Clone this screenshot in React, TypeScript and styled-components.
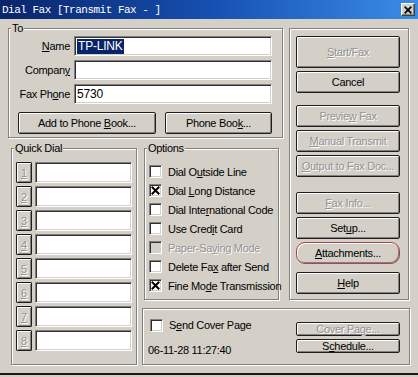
import React from "react";
import styled, { createGlobalStyle, css } from "styled-components";

const FACE = "#d4d0c8";
const SHADOW = "#808080";
const DARK = "#1e1e1e";

const GlobalStyle = createGlobalStyle`
	html, body {
		margin: 0;
		padding: 0;
		background: ${FACE};
	}
	body {
		font-family: "Liberation Sans", Arial, sans-serif;
		font-size: 11px;
		letter-spacing: -0.3px;
		color: #000;
	}
	#root {
		width: 418px;
		height: 377px;
		overflow: hidden;
	}
`;

const Window = styled.div`
	width: 418px;
	height: 375px;
	box-sizing: border-box;
	background: ${FACE};
	border-bottom: 2px solid #1a1a1a;
	display: flex;
	flex-direction: column;
`;

const TitleBar = styled.div`
	height: 19px;
	flex: none;
	display: flex;
	align-items: center;
	justify-content: space-between;
	padding: 0 3px 0 2px;
	background: linear-gradient(to right, #0a246a 0%, #1650b0 50%, #3a8ce6 100%);
`;

const TitleText = styled.span`
	font-family: "Liberation Mono", "DejaVu Sans Mono", monospace;
	font-size: 11px;
	letter-spacing: -0.5px;
	color: #fff;
	white-space: pre;
`;

const CloseButton = styled.div`
	width: 14px;
	height: 13px;
	box-sizing: border-box;
	background: ${FACE};
	border: 1px solid;
	border-color: #fff #404040 #404040 #fff;
	box-shadow: inset -1px -1px 0 ${SHADOW};
	display: flex;
	align-items: center;
	justify-content: center;
`;

const Body = styled.div`
	display: grid;
	grid-template-columns: 132px 145px 127px;
	grid-template-rows: 110px 162px 65px;
	grid-template-areas:
		"to to side"
		"quick opts side"
		"quick foot foot";
	padding: 9px 0 0 8px;
`;

const Group = styled.div`
	position: relative;
	box-sizing: border-box;
	border: 1px solid ${SHADOW};
	box-shadow: inset 1px 1px 0 #fff, 1px 1px 0 #fff;
`;

// caption sits over the top edge of the etched frame
const Caption = styled.span`
	position: absolute;
	top: -7px;
	left: 2px;
	padding: 0 1px;
	line-height: 12px;
	background: ${FACE};
`;

const ToGroup = styled(Group)`
	grid-area: to;
	margin-right: 2px;
	padding: 7px 10px 0 0;
`;

const FieldGrid = styled.div`
	display: grid;
	grid-template-columns: 61px 1fr;
	column-gap: 4px;
	row-gap: 4px;
	align-items: center;
`;

const FieldLabel = styled.span`
	text-align: right;
	white-space: nowrap;
`;

const TextField = styled.div<{ $h?: number }>`
	height: ${p => p.$h ?? 20}px;
	box-sizing: border-box;
	background: #fff;
	border: 1px solid;
	border-color: ${SHADOW} #fff #fff ${SHADOW};
	box-shadow: inset 1px 1px 0 #303030, inset -1px -1px 0 ${FACE};
	padding: 0 2px;
	display: flex;
	align-items: center;
	font-size: 12px;
	letter-spacing: -0.2px;
`;

const Selection = styled.span`
	background: #0a246a;
	color: #fff;
	padding: 0 1px;
	line-height: 15px;
`;

const BookRow = styled.div`
	display: flex;
	gap: 9px;
	margin-top: 8px;
	padding-left: 9px;
`;

const ButtonFace = styled.div<{ $off?: boolean; $h?: number; $mt?: number; $ring?: boolean; $w?: number }>`
	box-sizing: border-box;
	height: ${p => p.$h ?? 22}px;
	margin-top: ${p => p.$mt ?? 0}px;
	flex: 1;
	${p =>
		p.$w &&
		css`
			width: ${p.$w}px;
			flex: none;
		`}
	display: flex;
	align-items: center;
	justify-content: center;
	background: ${FACE};
	border: 1px solid ${p => (p.$ring ? "#b3424c" : DARK)};
	border-radius: ${p => (p.$ring ? "9px" : "2px")};
	box-shadow: inset 1px 1px 0 #fff, inset -1px -1px 0 ${SHADOW};
	color: ${p => (p.$off ? "#929292" : "#000")};
	text-shadow: ${p => (p.$off ? "1px 1px 0 #fff" : "none")};
	white-space: pre;
`;

type ButtonProps = React.ComponentProps<typeof ButtonFace>;

// label wrapped in a span so spaces next to access keys survive flex layout
const Button = ({ children, ...rest }: ButtonProps) => (
	<ButtonFace {...rest}>
		<span>{children}</span>
	</ButtonFace>
);

const Key = styled.u`
	text-underline-offset: 1px;
`;

const SidePanel = styled(Group)`
	grid-area: side;
	margin-left: 4px;
	width: 120px;
	padding: 7px 0 0 6px;
	display: flex;
	flex-direction: column;
	align-items: flex-start;
`;

const QuickGroup = styled(Group)`
	grid-area: quick;
	margin: 10px 3px 0;
	padding: 13px 4px 0;
	display: flex;
	flex-direction: column;
	gap: 3px;
`;

const QuickRow = styled.div`
	display: flex;
	gap: 3px;
`;

const QuickKey = styled(ButtonFace)`
	width: 16px;
	flex: none;
	border-radius: 1px;
`;

const QuickField = styled(TextField)`
	flex: 1;
`;

const OptionsGroup = styled(Group)`
	grid-area: opts;
	margin: 10px 6px 0 4px;
	padding: 13px 0 0 4px;
`;

const OptionRow = styled.div<{ $off?: boolean }>`
	height: 19px;
	display: flex;
	align-items: center;
	gap: 6px;
	white-space: pre;
	color: ${p => (p.$off ? "#929292" : "#000")};
	text-shadow: ${p => (p.$off ? "1px 1px 0 #fff" : "none")};
`;

const CheckBox = styled.span<{ $off?: boolean }>`
	width: 13px;
	height: 13px;
	flex: none;
	box-sizing: border-box;
	background: ${p => (p.$off ? FACE : "#fff")};
	border: 1px solid;
	border-color: ${SHADOW} #fff #fff ${SHADOW};
	box-shadow: inset 1px 1px 0 #303030, inset -1px -1px 0 ${FACE};
	display: flex;
	align-items: center;
	justify-content: center;
`;

const FootPanel = styled(Group)`
	grid-area: foot;
	margin: 8px 2px 0;
	padding: 5px 9px 0 5px;
	display: grid;
	grid-template-columns: 1fr 104px;
	grid-template-rows: 22px 22px;
	row-gap: 3px;
	align-items: center;
`;

const CoverRow = styled(OptionRow)`
	margin-left: 2px;
`;

const Stamp = styled.span`
	font-size: 11px;
`;

const FootButtons = styled.div`
	grid-column: 2;
	grid-row: 1 / span 2;
	display: flex;
	flex-direction: column;
	gap: 3px;
`;

const Cross = ({ size = 9 }: { size?: number }) => (
	<svg width={size} height={size} viewBox="0 0 9 9">
		<path d="M1.5 1.5 L7.5 7.5 M7.5 1.5 L1.5 7.5" stroke="#000" strokeWidth="2" strokeLinecap="square" />
	</svg>
);

const quickDial = [1, 2, 3, 4, 5, 6, 7, 8];

const options: { label: React.ReactNode; checked?: boolean; off?: boolean }[] = [
	{ label: <>Dial O<Key>u</Key>tside Line</> },
	{ label: <>Dial <Key>L</Key>ong Distance</>, checked: true },
	{ label: <>Dial Inte<Key>r</Key>national Code</> },
	{ label: <>Use Cred<Key>i</Key>t Card</> },
	{ label: <>Paper-Sa<Key>v</Key>ing Mode</>, off: true },
	{ label: <>Delete Fa<Key>x</Key> after Send</> },
	{ label: <>Fine Mo<Key>d</Key>e Transmission</>, checked: true }
];

export default function App() {
	return (
		<>
			<GlobalStyle />
			<Window>
				<TitleBar>
					<TitleText>Dial Fax [Transmit Fax - ]</TitleText>
					<CloseButton>
						<Cross size={8} />
					</CloseButton>
				</TitleBar>
				<Body>
					<ToGroup>
						<Caption>To</Caption>
						<FieldGrid>
							<FieldLabel>
								<Key>N</Key>ame
							</FieldLabel>
							<TextField>
								<Selection>TP-LINK</Selection>
							</TextField>
							<FieldLabel>
								Compan<Key>y</Key>
							</FieldLabel>
							<TextField />
							<FieldLabel>
								Fax Ph<Key>o</Key>ne
							</FieldLabel>
							<TextField>5730</TextField>
						</FieldGrid>
						<BookRow>
							<Button $w={138}>
								Add to Phone <Key>B</Key>ook...
							</Button>
							<Button>
								Phone Boo<Key>k</Key>...
							</Button>
						</BookRow>
					</ToGroup>

					<SidePanel>
						<Button $w={104} $h={32} $off>
							<Key>S</Key>tart/Fax
						</Button>
						<Button $w={104} $mt={3}>
							Cancel
						</Button>
						<Button $w={104} $mt={12} $off>
							Previe<Key>w</Key> Fax
						</Button>
						<Button $w={104} $mt={3} $off>
							<Key>M</Key>anual Transmit
						</Button>
						<Button $w={104} $mt={3} $off>
							<Key>O</Key>utput to Fax Doc...
						</Button>
						<Button $w={104} $mt={15} $off>
							<Key>F</Key>ax Info...
						</Button>
						<Button $w={104} $mt={3}>
							Set<Key>u</Key>p...
						</Button>
						<Button $w={104} $mt={3} $ring>
							<Key>A</Key>ttachments...
						</Button>
						<Button $w={104} $mt={8}>
							<Key>H</Key>elp
						</Button>
					</SidePanel>

					<QuickGroup>
						<Caption>Quick Dial</Caption>
						{quickDial.map(n => (
							<QuickRow key={n}>
								<QuickKey $h={21} $off>
									<Key>{n}</Key>
								</QuickKey>
								<QuickField $h={21} />
							</QuickRow>
						))}
					</QuickGroup>

					<OptionsGroup>
						<Caption>Options</Caption>
						{options.map((o, i) => (
							<OptionRow key={i} $off={o.off}>
								<CheckBox $off={o.off}>{o.checked && <Cross />}</CheckBox>
								<span>{o.label}</span>
							</OptionRow>
						))}
					</OptionsGroup>

					<FootPanel>
						<CoverRow>
							<CheckBox />
							<span>
								S<Key>e</Key>nd Cover Page
							</span>
						</CoverRow>
						<FootButtons>
							<Button $off>Cover Page...</Button>
							<Button>
								S<Key>c</Key>hedule...
							</Button>
						</FootButtons>
						<Stamp>06-11-28 11:27:40</Stamp>
					</FootPanel>
				</Body>
			</Window>
		</>
	);
}
